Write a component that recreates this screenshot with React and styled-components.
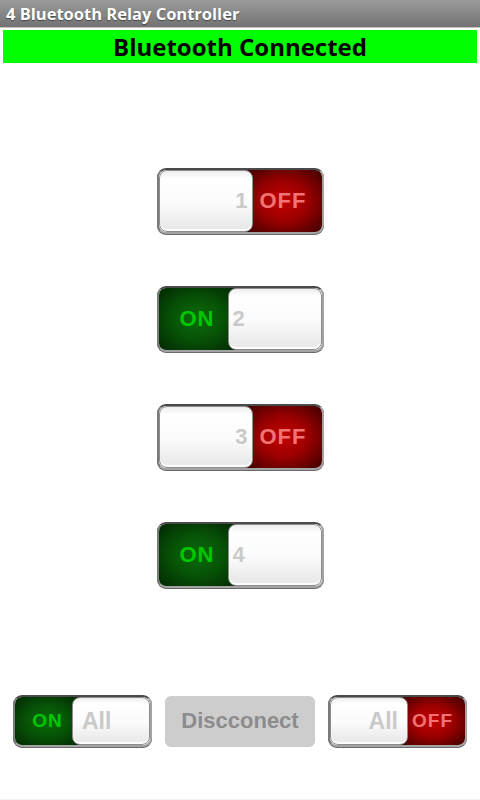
import React, { useState } from 'react'
import styled, { createGlobalStyle, css } from 'styled-components'

const GlobalStyle = createGlobalStyle`
  html, body {
    margin: 0;
    padding: 0;
    background: #ffffff;
  }
  * { box-sizing: border-box; }
`

const SIZES = {
  lg: { width: 167, height: 66, knob: 94, state: 22, label: 22, pad: 4 },
  sm: { width: 139, height: 52, knob: 78, state: 19, label: 23, pad: 9 },
}

const Page = styled.div`
  width: 480px;
  height: 800px;
  display: flex;
  flex-direction: column;
  background: #fff;
  border-bottom: 1px solid #f1f1f1;
  overflow: hidden;
`
const TitleBar = styled.div`
  height: 28px;
  padding: 0 6px;
  display: flex;
  align-items: center;
  background: linear-gradient(#9b9b9b, #727272);
  border-bottom: 1px solid #c4c4c4;
  color: #fff;
  font-family: "Open Sans", Roboto, sans-serif;
  font-weight: 700;
  font-size: 16.5px;
  text-shadow: 0 1px 1px rgba(0, 0, 0, 0.45);
`
const StatusBar = styled.div`
  margin: 2px 3px 0;
  height: 33px;
  display: flex;
  align-items: center;
  justify-content: center;
  background: #00ff00;
  color: #000;
  font-family: "Open Sans", Roboto, sans-serif;
  font-weight: 700;
  font-size: 24px;
`
const SwitchList = styled.div`
  padding-top: 105px;
  display: flex;
  flex-direction: column;
  align-items: center;
  gap: 52px;
`
const BottomRow = styled.div`
  margin-top: 107px;
  padding: 0 13px;
  display: flex;
  align-items: center;
  justify-content: space-between;
`
const Frame = styled.div`
  width: ${p => SIZES[p.size].width}px;
  height: ${p => SIZES[p.size].height}px;
  display: flex;
  border: 2px solid #a3a3a3;
  border-top-color: #4a4a4a;
  border-left-color: #7a7a7a;
  border-radius: 9px;
  box-shadow: 0 1px 0 #6a6a6a;
  overflow: hidden;
  cursor: pointer;
  background: #fff;
  font-family: "Liberation Sans", Arial, sans-serif;
  font-weight: 700;
`
const Knob = styled.div`
  position: relative;
  z-index: 1;
  flex: 0 0 ${p => SIZES[p.size].knob}px;
  display: flex;
  align-items: center;
  justify-content: ${p => (p.on ? 'flex-start' : 'flex-end')};
  padding: 0 ${p => SIZES[p.size].pad}px;
  border: 1.5px solid #8c8c8c;
  border-radius: 8px;
  background: linear-gradient(#ededed 0%, #ffffff 12%, #fafafa 55%, #e6e6e6 100%);
  box-shadow: inset 0 -2px 1px rgba(255, 255, 255, 0.9);
  color: #c9c9c9;
  font-size: ${p => SIZES[p.size].label}px;
`
const Lamp = styled.div`
  flex: 1;
  display: flex;
  align-items: center;
  justify-content: center;
  letter-spacing: 1px;
  font-size: ${p => SIZES[p.size].state}px;
  ${p => (p.on
    ? css`
      margin-right: -8px;
      background: radial-gradient(ellipse at center, #0b6c0b 0%, #075407 45%, #022702 100%);
      color: #00c800;
    `
    : css`
      margin-left: -8px;
      background: radial-gradient(ellipse at center, #c40000 0%, #9c0000 45%, #3c0000 100%);
      color: #f27373;
    `)}
`
const DisconnectButton = styled.button`
  width: 150px;
  height: 51px;
  border: none;
  border-radius: 6px;
  background: #cdcdcd;
  color: #8c8c8c;
  font-family: "Liberation Sans", Arial, sans-serif;
  font-weight: 700;
  font-size: 22px;
  cursor: pointer;
`

const Switch = ({ on, size, label, onToggle }) => (
  <Frame size={size} onClick={onToggle}>
    {on && <Lamp on size={size}>ON</Lamp>}
    <Knob on={on} size={size}>{label}</Knob>
    {!on && <Lamp size={size}>OFF</Lamp>}
  </Frame>
)

export default function App() {
  const [relays, setRelays] = useState([false, true, false, true])

  const toggle = i => setRelays(r => r.map((v, j) => (j === i ? !v : v)))

  return (
    <Page>
      <GlobalStyle />
      <TitleBar>4 Bluetooth Relay Controller</TitleBar>
      <StatusBar>Bluetooth Connected</StatusBar>
      <SwitchList>
        {relays.map((on, i) => (
          <Switch key={i} size="lg" on={on} label={i + 1} onToggle={() => toggle(i)} />
        ))}
      </SwitchList>
      <BottomRow>
        <Switch size="sm" on label="All" onToggle={() => setRelays([true, true, true, true])} />
        <DisconnectButton>Discconect</DisconnectButton>
        <Switch size="sm" on={false} label="All" onToggle={() => setRelays([false, false, false, false])} />
      </BottomRow>
    </Page>
  )
}
